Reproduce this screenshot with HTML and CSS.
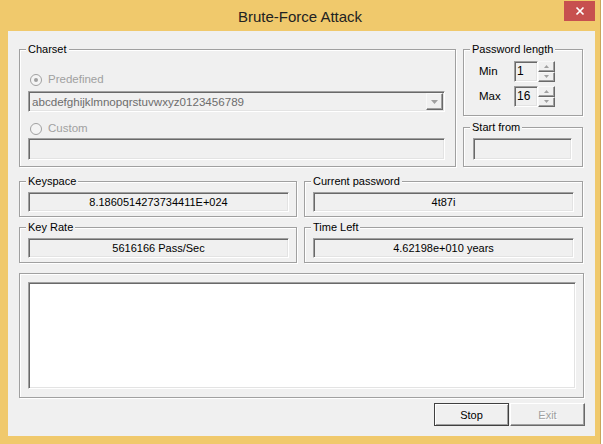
FILE: index.html
```html
<!DOCTYPE html>
<html>
<head>
<meta charset="utf-8">
<title>Brute-Force Attack</title>
<link rel="stylesheet" href="styles.css">
</head>
<body>
<div class="window">
  <div class="titlebar">
    <div class="title">Brute-Force Attack</div>
    <div class="close">
      <svg width="10" height="10" viewBox="0 0 10 10"><path d="M1.5 1.5L8.5 8.5M8.5 1.5L1.5 8.5" stroke="#fff" stroke-width="1.7" fill="none"/></svg>
    </div>
  </div>
  <div class="client">
    <div class="row1">
      <div class="group charset">
        <span class="legend">Charset</span>
        <div class="radio-row">
          <svg class="radio" width="12" height="12" viewBox="0 0 12 12"><circle cx="6" cy="6" r="5.5" fill="#f4f4f4" stroke="#a0a0a0"/><circle cx="6" cy="6" r="2" fill="#a0a0a0"/></svg>
          <span class="dis">Predefined</span>
        </div>
        <div class="combo">
          <span class="combo-text">abcdefghijklmnopqrstuvwxyz0123456789</span>
          <span class="drop-btn"><svg width="7" height="4" viewBox="0 0 7 4"><path d="M0 0H7L3.5 4Z" fill="#a0a0a0"/></svg></span>
        </div>
        <div class="radio-row r2">
          <svg class="radio" width="12" height="12" viewBox="0 0 12 12"><circle cx="6" cy="6" r="5.5" fill="#f4f4f4" stroke="#a0a0a0"/></svg>
          <span class="dis">Custom</span>
        </div>
        <div class="edit custom-edit"></div>
      </div>
      <div class="rightcol">
        <div class="group pwlen">
          <span class="legend">Password length</span>
          <div class="spin-row">
            <span class="lbl">Min</span>
            <div class="edit num">1</div>
            <div class="spin">
              <div class="sb"><svg width="5" height="3" viewBox="0 0 5 3"><path d="M2.5 0L5 3H0Z" fill="#a0a0a0"/></svg></div>
              <div class="sb"><svg width="5" height="3" viewBox="0 0 5 3"><path d="M0 0H5L2.5 3Z" fill="#a0a0a0"/></svg></div>
            </div>
          </div>
          <div class="spin-row r2">
            <span class="lbl">Max</span>
            <div class="edit num">16</div>
            <div class="spin">
              <div class="sb"><svg width="5" height="3" viewBox="0 0 5 3"><path d="M2.5 0L5 3H0Z" fill="#a0a0a0"/></svg></div>
              <div class="sb"><svg width="5" height="3" viewBox="0 0 5 3"><path d="M0 0H5L2.5 3Z" fill="#a0a0a0"/></svg></div>
            </div>
          </div>
        </div>
        <div class="group start">
          <span class="legend">Start from</span>
          <div class="edit start-edit"></div>
        </div>
      </div>
    </div>
    <div class="row row2">
      <div class="group g-left">
        <span class="legend">Keyspace</span>
        <div class="edit ro">8.1860514273734411E+024</div>
      </div>
      <div class="group g-right">
        <span class="legend">Current password</span>
        <div class="edit ro">4t87i</div>
      </div>
    </div>
    <div class="row">
      <div class="group g-left">
        <span class="legend">Key Rate</span>
        <div class="edit ro">5616166 Pass/Sec</div>
      </div>
      <div class="group g-right">
        <span class="legend">Time Left</span>
        <div class="edit ro">4.62198e+010 years</div>
      </div>
    </div>
    <div class="group log">
      <div class="edit log-edit"></div>
    </div>
    <div class="buttons">
      <div class="btn default">Stop</div>
      <div class="btn disabled">Exit</div>
    </div>
  </div>
</div>
</body>
</html>
```
FILE: styles.css
```css
* { box-sizing: border-box; }
html, body { margin: 0; padding: 0; }
body {
  width: 603px;
  height: 444px;
  overflow: hidden;
  background: #ffffff;
  font-family: "Liberation Sans", Arial, sans-serif;
  font-size: 11px;
  color: #000;
}
.window {
  width: 601px;
  height: 444px;
  background: #f0c96c;
  border-right: 1px solid #c9a65a;
  display: flex;
  flex-direction: column;
}
.titlebar {
  height: 31px;
  display: grid;
}
.title {
  grid-area: 1 / 1;
  justify-self: center;
  align-self: center;
  margin-top: 1px;
  font-size: 15px;
  color: #222222;
}
.close {
  grid-area: 1 / 1;
  justify-self: end;
  align-self: start;
  margin-top: 1px;
  margin-right: 5px;
  width: 31px;
  height: 20px;
  background: #c7504f;
  display: flex;
  align-items: center;
  justify-content: center;
}
.close svg { display: block; }
.client {
  margin: 0 5px 0 8px;
  height: 405px;
  background: #f0f0f0;
  padding: 18px 0 0 11px;
}
.group {
  position: relative;
  border: 1px solid #a0a0a0;
  box-shadow: inset 1px 1px 0 #fff, 1px 1px 0 #fff;
}
.legend {
  position: absolute;
  top: -7px;
  left: 6px;
  padding: 0 2px;
  line-height: 13px;
  background: #f0f0f0;
  white-space: nowrap;
}
.edit {
  border: 1px solid;
  border-color: #a0a0a0 #ffffff #ffffff #a0a0a0;
  box-shadow: inset 1px 1px 0 #696969, inset -1px -1px 0 #e3e3e3;
  background: #f0f0f0;
}
.row1 {
  display: flex;
  gap: 7px;
  height: 118px;
}
.charset {
  width: 437px;
  height: 118px;
  padding: 23px 0 0 8px;
}
.radio-row {
  display: flex;
  align-items: center;
  gap: 6px;
  height: 13px;
  margin-left: 2px;
}
.radio { display: block; }
.radio-row.r2 { margin-top: 10px; }
.dis {
  color: #a0a0a0;
  line-height: 13px;
  font-size: 11.5px;
}
.combo {
  margin-top: 5px;
  width: 417px;
  height: 21px;
  border: 1px solid;
  border-color: #a0a0a0 #ffffff #ffffff #a0a0a0;
  box-shadow: inset 1px 1px 0 #696969, inset -1px -1px 0 #e3e3e3;
  background: #f0f0f0;
  display: flex;
  align-items: center;
  padding: 0 1px 0 3px;
}
.combo-text {
  color: #6d6d6d;
  line-height: 13px;
  font-size: 11.6px;
}
.drop-btn {
  margin-left: auto;
  width: 17px;
  height: 17px;
  border: 1px solid;
  border-color: #f8f8f8 #696969 #696969 #f8f8f8;
  box-shadow: inset -1px -1px 0 #a0a0a0;
  background: #f0f0f0;
  display: flex;
  align-items: center;
  justify-content: center;
}
.drop-btn svg { display: block; }
.custom-edit {
  margin-top: 3px;
  width: 417px;
  height: 22px;
}
.rightcol {
  width: 120px;
  display: flex;
  flex-direction: column;
  gap: 11px;
}
.pwlen {
  height: 67px;
  padding: 11px 0 0 15px;
}
.spin-row {
  display: flex;
  align-items: center;
  height: 21px;
}
.spin-row.r2 { margin-top: 4px; }
.lbl {
  width: 35px;
  line-height: 13px;
  font-size: 11.5px;
}
.num {
  width: 24px;
  height: 21px;
  font-size: 12px;
  line-height: 19px;
  padding-left: 2px;
}
.spin {
  width: 17px;
  height: 21px;
  display: flex;
  flex-direction: column;
}
.sb {
  flex: 1;
  border: 1px solid;
  border-color: #f8f8f8 #696969 #696969 #f8f8f8;
  box-shadow: inset -1px -1px 0 #a0a0a0;
  background: #f0f0f0;
  display: flex;
  align-items: center;
  justify-content: center;
}
.sb svg { display: block; }
.start {
  height: 40px;
  padding: 10px 0 0 9px;
}
.start-edit {
  width: 99px;
  height: 22px;
}
.row {
  display: flex;
  gap: 7px;
  margin-top: 10px;
  height: 36px;
}
.row2 { margin-top: 14px; }
.row .group { padding: 10px 0 0 8px; }
.g-left { width: 278px; }
.g-right { width: 279px; }
.ro {
  width: 261px;
  height: 20px;
  text-align: center;
  line-height: 18px;
}
.log {
  margin-top: 10px;
  width: 565px;
  height: 125px;
  padding: 8px;
}
.log-edit {
  width: 548px;
  height: 107px;
  background: #ffffff;
}
.buttons {
  margin-top: 5px;
  width: 566px;
  display: flex;
  justify-content: flex-end;
  gap: 1px;
}
.btn {
  width: 75px;
  height: 23px;
  display: flex;
  align-items: center;
  justify-content: center;
  border: 1px solid;
  background: #f0f0f0;
  font-size: 11px;
}
.btn.default {
  border-color: #404040;
  box-shadow: inset 1px 1px 0 #ffffff, inset -1px -1px 0 #a0a0a0;
  color: #000;
}
.btn.disabled {
  border-color: #ffffff #696969 #696969 #ffffff;
  box-shadow: inset -1px -1px 0 #a0a0a0;
  color: #a0a0a0;
  text-shadow: 1px 1px 0 #ffffff;
}
```
